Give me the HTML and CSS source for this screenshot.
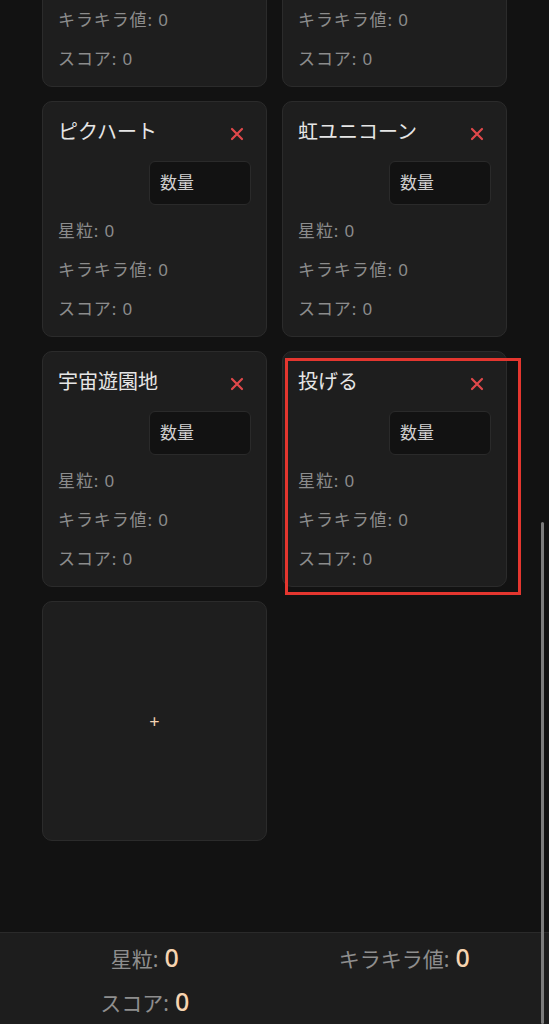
FILE: index.html
```html
<!DOCTYPE html>
<html lang="ja">
<head>
<meta charset="utf-8">
<link rel="stylesheet" href="styles.css">
</head>
<body>
<div class="app">
  <main class="scroller">
    <div class="grid">
      <div class="card">
        <div class="card-head"><span class="title">ミルキーウェイ</span><button class="close"><svg viewBox="0 0 14 14" width="14" height="14"><path d="M2 2L12 12M12 2L2 12" stroke="#e0484a" stroke-width="2.2" stroke-linecap="round"/></svg></button></div>
        <div class="qty-row"><div class="qty">数量</div></div>
        <div class="stat">星粒: 0</div>
        <div class="stat">キラキラ値: 0</div>
        <div class="stat">スコア: 0</div>
      </div>
      <div class="card">
        <div class="card-head"><span class="title">ほしくず</span><button class="close"><svg viewBox="0 0 14 14" width="14" height="14"><path d="M2 2L12 12M12 2L2 12" stroke="#e0484a" stroke-width="2.2" stroke-linecap="round"/></svg></button></div>
        <div class="qty-row"><div class="qty">数量</div></div>
        <div class="stat">星粒: 0</div>
        <div class="stat">キラキラ値: 0</div>
        <div class="stat">スコア: 0</div>
      </div>
      <div class="card">
        <div class="card-head"><span class="title">ピクハート</span><button class="close"><svg viewBox="0 0 14 14" width="14" height="14"><path d="M2 2L12 12M12 2L2 12" stroke="#e0484a" stroke-width="2.2" stroke-linecap="round"/></svg></button></div>
        <div class="qty-row"><div class="qty">数量</div></div>
        <div class="stat">星粒: 0</div>
        <div class="stat">キラキラ値: 0</div>
        <div class="stat">スコア: 0</div>
      </div>
      <div class="card">
        <div class="card-head"><span class="title">虹ユニコーン</span><button class="close"><svg viewBox="0 0 14 14" width="14" height="14"><path d="M2 2L12 12M12 2L2 12" stroke="#e0484a" stroke-width="2.2" stroke-linecap="round"/></svg></button></div>
        <div class="qty-row"><div class="qty">数量</div></div>
        <div class="stat">星粒: 0</div>
        <div class="stat">キラキラ値: 0</div>
        <div class="stat">スコア: 0</div>
      </div>
      <div class="card">
        <div class="card-head"><span class="title">宇宙遊園地</span><button class="close"><svg viewBox="0 0 14 14" width="14" height="14"><path d="M2 2L12 12M12 2L2 12" stroke="#e0484a" stroke-width="2.2" stroke-linecap="round"/></svg></button></div>
        <div class="qty-row"><div class="qty">数量</div></div>
        <div class="stat">星粒: 0</div>
        <div class="stat">キラキラ値: 0</div>
        <div class="stat">スコア: 0</div>
      </div>
      <div class="card highlighted">
        <div class="card-head"><span class="title">投げる</span><button class="close"><svg viewBox="0 0 14 14" width="14" height="14"><path d="M2 2L12 12M12 2L2 12" stroke="#e0484a" stroke-width="2.2" stroke-linecap="round"/></svg></button></div>
        <div class="qty-row"><div class="qty">数量</div></div>
        <div class="stat">星粒: 0</div>
        <div class="stat">キラキラ値: 0</div>
        <div class="stat">スコア: 0</div>
        <div class="annot"></div>
      </div>
      <div class="card add-card"><span class="plus">+</span></div>
    </div>
  </main>
  <footer class="totals">
    <div class="total"><span class="t-label">星粒:</span><span class="t-val">0</span></div>
    <div class="total"><span class="t-label">キラキラ値:</span><span class="t-val">0</span></div>
    <div class="total"><span class="t-label">スコア:</span><span class="t-val">0</span></div>
  </footer>
  <div class="scrollbar"></div>
</div>
</body>
</html>
```
FILE: styles.css
```css
* { box-sizing: border-box; }
html, body { margin: 0; padding: 0; background: #121212; }
body {
  font-family: "Noto Sans", "Noto Sans CJK JP", sans-serif;
  color: #8c8c8c;
}
.app {
  position: relative;
  height: 1024px;
  display: flex;
  flex-direction: column;
  overflow: hidden;
}
.scroller {
  flex: 1;
  overflow: hidden;
}
.grid {
  display: grid;
  grid-template-columns: 225px 225px;
  column-gap: 15px;
  row-gap: 14px;
  padding: 0 42px;
  margin-top: -149px;
}
.card {
  position: relative;
  background: #1e1e1e;
  border: 1px solid #2b2b2b;
  border-radius: 10px;
  padding: 16px 15px 16px 15px;
  height: 236px;
  display: flex;
  flex-direction: column;
}
.card-head {
  display: flex;
  justify-content: space-between;
  align-items: flex-start;
  height: 28px;
}
.title {
  font-size: 20px;
  line-height: 28px;
  color: #e6e6e6;
  font-weight: 400;
}
.close {
  background: none;
  border: none;
  padding: 0;
  margin: 8px 6px 0 0;
  width: 16px;
  height: 16px;
  display: flex;
  align-items: center;
  justify-content: center;
}
.qty-row {
  display: flex;
  justify-content: flex-end;
  margin-top: 15px;
  margin-bottom: 14px;
}
.qty {
  width: 102px;
  height: 44px;
  background: #121212;
  border: 1px solid #2a2a2a;
  border-radius: 6px;
  font-size: 17px;
  line-height: 42px;
  padding-left: 10px;
  color: #cfcfcf;
}
.stat {
  font-size: 17px;
  line-height: 24px;
  letter-spacing: 0.9px;
  color: #8c8c8c;
}
.stat + .stat { margin-top: 15px; }
.add-card {
  height: 240px;
  align-items: center;
  justify-content: center;
}
.plus {
  color: #f3d3b3;
  font-size: 18px;
  line-height: 1;
}
.annot {
  position: absolute;
  left: 2px;
  top: 6px;
  width: 236px;
  height: 237px;
  border: 3px solid #e4362f;
  pointer-events: none;
}
.totals {
  height: 92px;
  background: #1d1d1d;
  border-top: 1px solid #2a2a2a;
  display: grid;
  grid-template-columns: 1fr 1fr;
  row-gap: 10px;
  padding: 9px 15px 10px 15px;
  align-content: start;
}
.total {
  text-align: center;
  line-height: 30px;
  white-space: nowrap;
}
.t-label {
  font-size: 21px;
  color: #8e8e8e;
}
.t-val {
  font-size: 25px;
  font-weight: 500;
  color: #f6d4b1;
  margin-left: 6px;
}
.scrollbar {
  position: absolute;
  right: 5px;
  top: 522px;
  bottom: 0;
  width: 3px;
  border-radius: 2px;
  background: #7c7c7c;
}
```
